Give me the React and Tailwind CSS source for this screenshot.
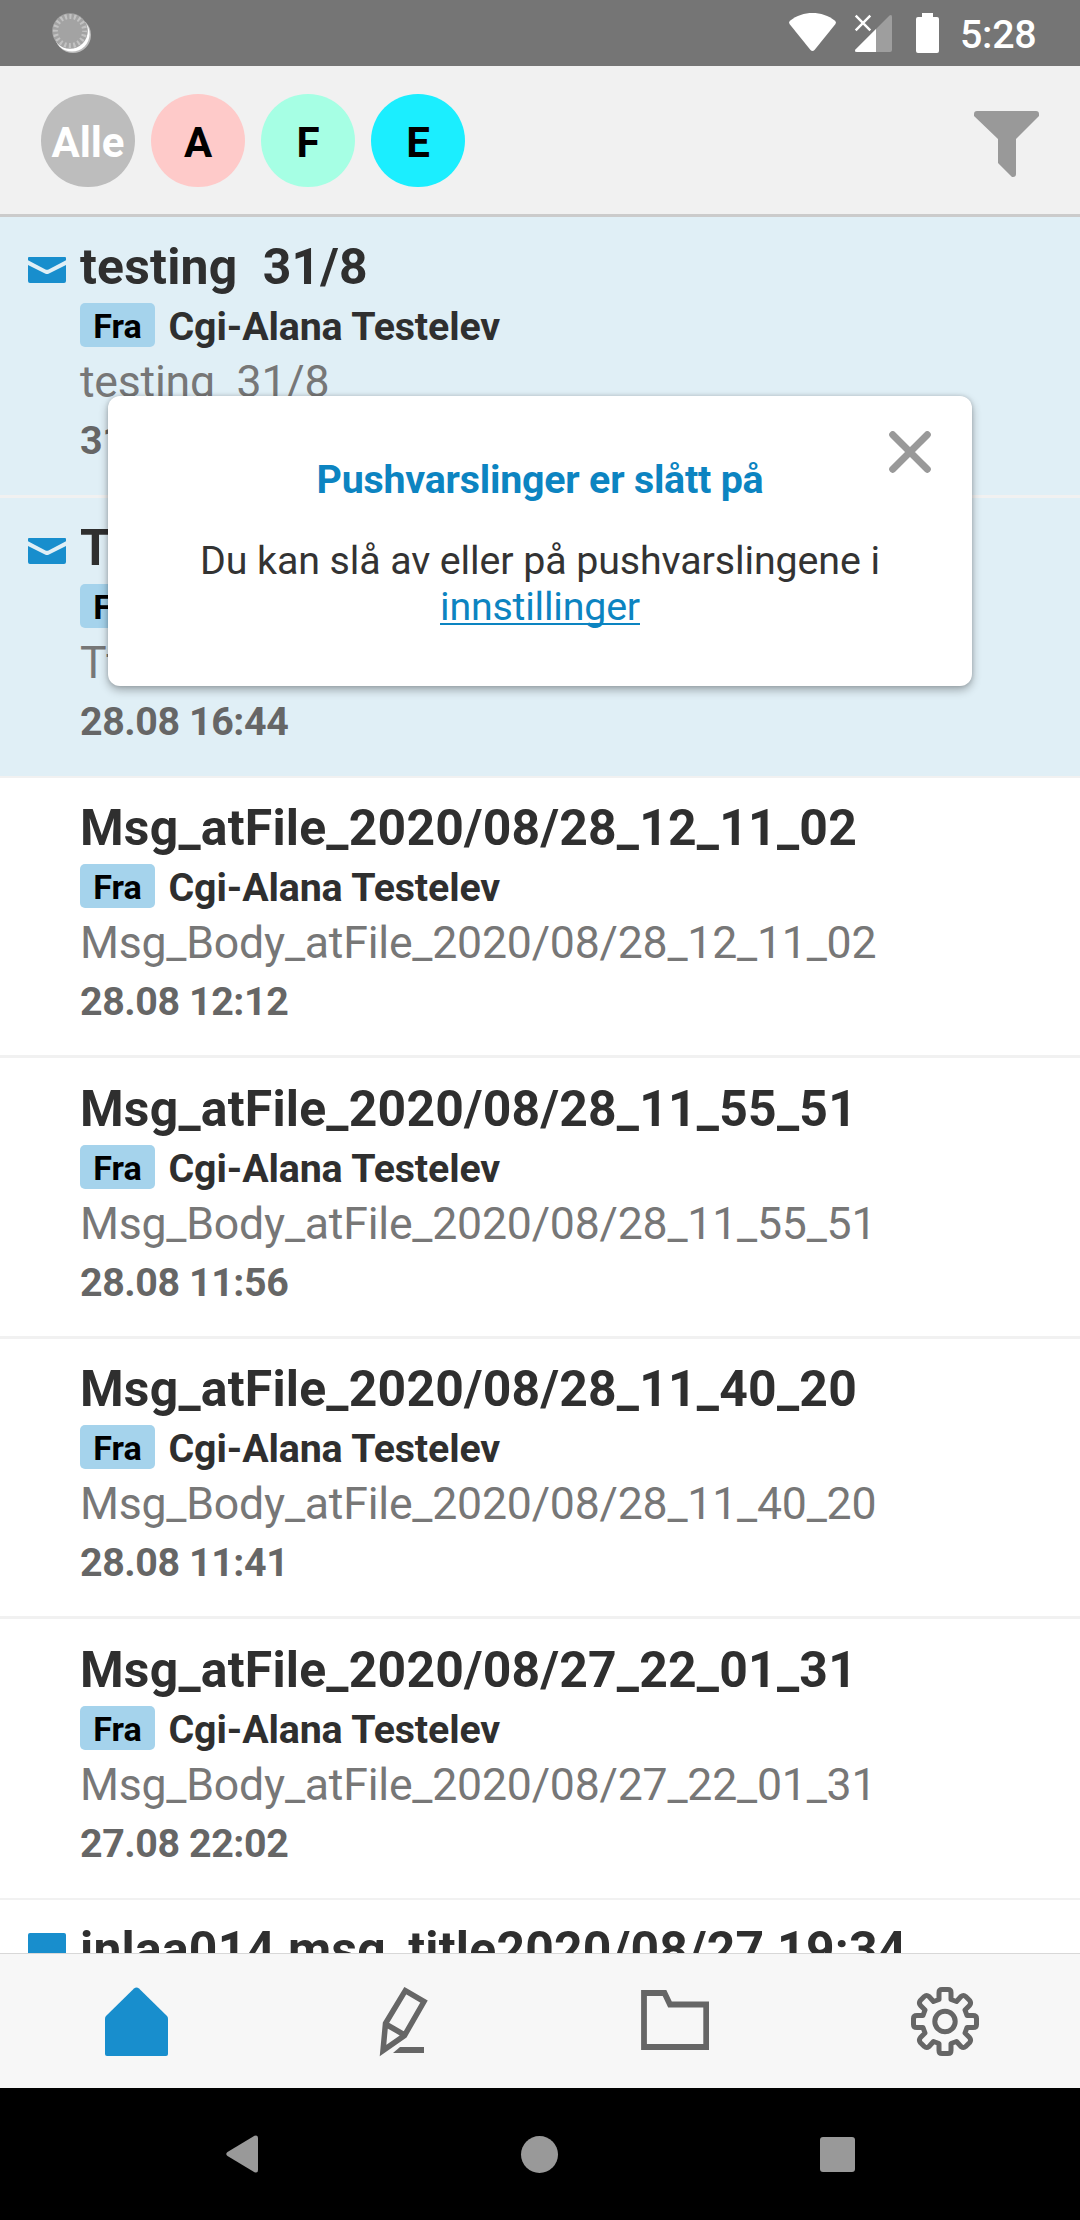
const messages = [
  { title: "testing\u00a0 31/8", body: "testing\u00a0 31/8", date: "31.08 09:24", unread: true, h: "h-[281px] border-b-3" },
  { title: "Test", body: "Ttest", date: "28.08 16:44", unread: true, h: "h-[280px] border-b-2" },
  { title: "Msg_atFile_2020/08/28_12_11_02", body: "Msg_Body_atFile_2020/08/28_12_11_02", date: "28.08 12:12", h: "h-[280px] border-b-3" },
  { title: "Msg_atFile_2020/08/28_11_55_51", body: "Msg_Body_atFile_2020/08/28_11_55_51", date: "28.08 11:56", h: "h-[281px] border-b-3 pt-px" },
  { title: "Msg_atFile_2020/08/28_11_40_20", body: "Msg_Body_atFile_2020/08/28_11_40_20", date: "28.08 11:41", h: "h-[280px] border-b-3" },
  { title: "Msg_atFile_2020/08/27_22_01_31", body: "Msg_Body_atFile_2020/08/27_22_01_31", date: "27.08 22:02", h: "h-[281px] border-b-2 pt-px" },
  { title: "inlaa014 msg_title2020/08/27 19:34", body: "inlaa014", date: "27.08 19:34", replied: true, h: "h-[280px] border-b-3" },
];

const filters = [
  { label: "Alle", style: "bg-[#bdbdbd] text-white" },
  { label: "A", style: "bg-[#fecac9] text-black" },
  { label: "F", style: "bg-[#a6ffe4] text-black" },
  { label: "E", style: "bg-[#1beeff] text-black" },
];

function StatusBar() {
  return (
    <div className="flex h-[66px] shrink-0 items-start bg-[#757575] text-white">
      <svg className="ml-[50px] mt-[10px]" width="46" height="46" viewBox="50 10 46 46">
        <circle cx="73" cy="35" r="18" fill="#fff" fillOpacity="0.5" />
        <circle cx="72" cy="34" r="17.6" fill="#fff" />
        <circle cx="70" cy="31" r="17.8" fill="#a3a3a3" />
        <circle cx="70" cy="31" r="14.6" fill="none" stroke="#c2c2c2" strokeWidth="5" strokeDasharray="2.1 2.487" strokeDashoffset="1.05" />
      </svg>
      <svg className="ml-auto" width="155" height="66" viewBox="785 0 155 66">
        <path d="M812.5 51Q811.500 51 810.500 50L789.500 24Q788.300 22.200 790 20.800C803 10.500 822 10.500 835 20.800Q836.700 22.200 835.500 24L814.500 50Q813.500 51 812.500 51Z" fill="#fff" />
        <path d="M889.500 15.500Q892 14 892 17V50Q892 52 890 52H857Q854 52 855.500 49.500Z" fill="#9e9e9e" />
        <path d="M876 29V52H857Q854 52 855.500 49.500Z" fill="#fff" />
        <path d="M855.700 15.700L870.300 30.300M870.300 15.700L855.700 30.300" stroke="#fff" strokeWidth="2.4" />
        <path d="M922 13H933V17H937Q939 17 939 19V51Q939 53 937 53H918Q916 53 916 51V19Q916 17 918 17H922Z" fill="#fff" />
      </svg>
      <span className="ml-[20px] mr-[44px] mt-[12px] w-[76px] text-[39.400px] leading-[46px] font-medium tracking-[-0.300px] whitespace-nowrap">5:28</span>
    </div>
  );
}

function Header() {
  return (
    <header className="flex h-[151px] shrink-0 items-start border-b-3 border-[#cbcbcb] bg-[#f1f1f1] pl-[41px] pt-[28px]">
      <div className="flex gap-4">
        {filters.map((f) => (
          <div key={f.label} className={`flex h-[93px] w-[94px] items-center justify-center rounded-full pt-[4px] text-[42px] leading-[50px] font-bold ${f.style}`}>
            {f.label}
          </div>
        ))}
      </div>
      <svg className="ml-auto mr-[41px] mt-[17px]" width="65" height="66" viewBox="0 0 65 66" fill="#999">
        <path d="M3 0H62Q65 0 65 3V5L42 28V63Q42 66 39 66H38L24 52V28L0 5V3Q0 0 3 0Z" />
      </svg>
    </header>
  );
}

function Envelope() {
  return (
    <svg className="ml-[28px] mt-[40px] shrink-0" width="38" height="26" viewBox="0 0 38 26" fill="#188ecd">
      <path d="M1 0H37Q38 0 38 1V3.200L20.500 12.500Q19 13.200 17.500 12.500L0 3.200V1Q0 0 1 0Z" />
      <path d="M0 8L17.500 16.700Q19 17.500 20.500 16.700L38 8V24Q38 26 36 26H2Q0 26 0 24Z" />
    </svg>
  );
}

function Message({ m }) {
  return (
    <li className={`flex shrink-0 items-start border-[#f1f1f1] ${m.h} ${m.unread ? "bg-[#e0eff6]" : "bg-white"}`}>
      <div className="w-[80px] shrink-0">
        {m.unread && <Envelope />}
        {m.replied && <div className="ml-[28px] mt-[33px] h-[40px] w-[38px] rounded-[2px] bg-[#188ecd]" />}
      </div>
      <div className="whitespace-nowrap">
        <h2 className="mt-[21px] h-[65px] text-[49.875px] leading-[58px] font-bold tracking-[0.220px] text-[#2f2f2f]">{m.title}</h2>
        <div className="flex h-[44px] items-start">
          <span className="h-[44px] w-[75px] rounded-[5px] bg-[#a5d3ec] pt-[3px] text-center text-[34.125px] leading-[40px] font-bold text-black">Fra</span>
          <span className="ml-[13.500px] mt-[1px] text-[39.375px] leading-[46px] font-bold tracking-[-0.130px] text-[#2f2f2f]">Cgi-Alana Testelev</span>
        </div>
        <p className="mt-[9px] text-[44.625px] leading-[52px] tracking-[-0.220px] text-[#777]">{m.body}</p>
        <p className="mt-[10px] text-[39.375px] leading-[46px] font-bold tracking-[-0.420px] text-[#666]">{m.date}</p>
      </div>
    </li>
  );
}

function Popup() {
  return (
    <div className="absolute left-[108px] top-[396px] h-[290px] w-[864px] rounded-[12px] bg-white pt-[61px] text-center text-[39.375px] leading-[46px] shadow-[0_4px_10px_rgba(0,0,0,0.3),0_0_4px_rgba(0,0,0,0.15)]">
      <h3 className="font-bold tracking-[-0.220px] text-[#0c84c1]">Pushvarslinger er slått på</h3>
      <p className="mt-[35px] tracking-[-0.100px] text-[#333]">
        Du kan slå av eller på pushvarslingene i<br />
        <a className="tracking-[-0.200px] text-[#0c84c1] underline decoration-2 underline-offset-[3px] [text-decoration-skip-ink:none]">innstillinger</a>
      </p>
      <svg className="absolute right-[41px] top-[35px]" width="42" height="42" viewBox="0 0 42 42">
        <path d="M3.700 3.700L38.300 38.300M38.300 3.700L3.700 38.300" stroke="#999" strokeWidth="7" strokeLinecap="round" />
      </svg>
    </div>
  );
}

function Gear() {
  return (
    <svg width="70" height="70" viewBox="-35 -35.500 70 70" fill="none" stroke="#666" strokeWidth="5" strokeLinejoin="round">
      <circle r="10.200" />
      <path d="M-6 -22V-29Q-6 -32 -3 -32H3Q6 -32 6 -29V-22L11.500 -20L16 -25Q18.500 -27 20.700 -25L24.700 -21Q26.500 -18.500 24.500 -16L20 -11.500L22 -6H28Q31.500 -6 31.500 -3V3Q31.500 6 28 6H22L20 11.500L24.500 16Q26.500 18.500 24.700 21L20.700 25Q18.500 27 16 25L11.500 20L6 22V29Q6 32 3 32H-3Q-6 32 -6 29V22L-11.500 20L-16 25Q-18.500 27 -20.700 25L-24.700 21Q-26.500 18.500 -24.500 16L-20 11.500L-22 6H-28Q-31.500 6 -31.500 3V-3Q-31.500 -6 -28 -6H-22L-20 -11.500L-24.500 -16Q-26.500 -18.500 -24.700 -21L-20.700 -25Q-18.500 -27 -16 -25L-11.500 -20Z" />
    </svg>
  );
}

function TabBar() {
  return (
    <nav className="grid h-[135px] shrink-0 grid-cols-4 border-t border-[#d8d8d8] bg-[#f7f7f7]">
      <div className="flex justify-center pt-[33px]">
        <svg width="63" height="69" viewBox="0 0 63 69" className="translate-x-[1px]" fill="#188ecd">
          <path d="M29 1.500Q31.500 -0.500 34 1.500L62 29Q63 30 63 31.500V67Q63 69 61 69H2Q0 69 0 67V31.500Q0 30 1 29Z" />
        </svg>
      </div>
      <div className="flex justify-center pt-[33px]">
        <svg width="50" height="70" viewBox="379 1987 50 70" className="translate-x-[-1px]" fill="none" stroke="#666" strokeWidth="5.500">
          <path d="M405.300 1990.700L424 2001.500L404.500 2035.500L383 2050.500L385.500 2023.500ZM385.500 2024L404.500 2035" />
          <path d="M393 2053L400 2047H424V2053Z" fill="#666" stroke="none" />
        </svg>
      </div>
      <div className="flex justify-center pt-[36px]">
        <svg width="68" height="60" viewBox="0 0 68 60" fill="none" stroke="#666" strokeWidth="5.800">
          <path d="M3 57V3H23.500L29 14.500H65.200V57Z" />
        </svg>
      </div>
      <div className="flex justify-center pt-[32px]">
        <Gear />
      </div>
    </nav>
  );
}

function SystemNav() {
  return (
    <div className="flex h-[132px] shrink-0 items-center justify-between bg-black pl-[226px] pr-[225px]">
      <svg width="32" height="38" viewBox="0 0 32 38" fill="#999">
        <path d="M28.500 0.800Q32 -0.500 32 3V35Q32 38.500 28.500 37.200L1.500 21Q-1 19 1.500 17Z" />
      </svg>
      <div className="size-[37px] rounded-full bg-[#999]" />
      <div className="size-[35px] rounded-[3px] bg-[#999]" />
    </div>
  );
}

export default function App() {
  return (
    <div className="relative flex h-[2220px] w-[1080px] flex-col overflow-hidden bg-white font-['Roboto',sans-serif]">
      <StatusBar />
      <Header />
      <ul className="flex h-[1736px] shrink-0 flex-col overflow-hidden">
        {messages.map((m) => (
          <Message key={m.title} m={m} />
        ))}
      </ul>
      <TabBar />
      <SystemNav />
      <Popup />
    </div>
  );
}
